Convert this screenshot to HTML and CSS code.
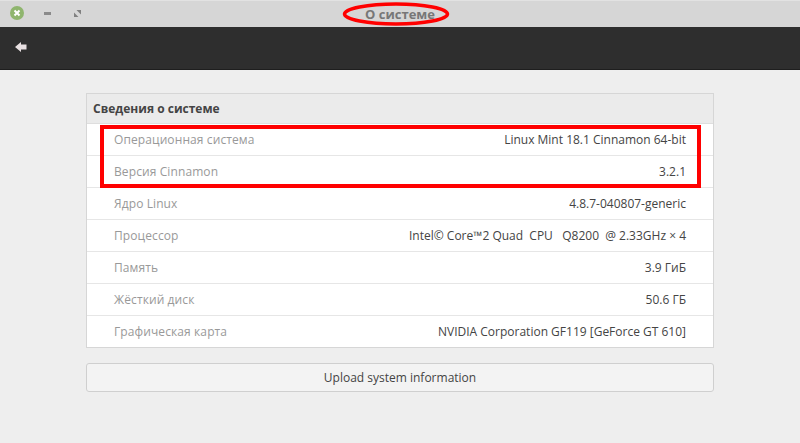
FILE: index.html
```html
<!DOCTYPE html>
<html lang="ru">
<head>
<meta charset="utf-8">
<title>О системе</title>
<link rel="stylesheet" href="styles.css">
</head>
<body>
<div class="window">
  <header class="titlebar">
    <div class="controls">
      <span class="close"><svg width="14" height="14" viewBox="0 0 14 14"><circle cx="7" cy="7" r="7" fill="#8fb56e"/><path d="M4.5 4.5l5 5M9.5 4.5l-5 5" stroke="#fff" stroke-width="2"/></svg></span>
      <span class="minimize"><svg width="7" height="3" viewBox="0 0 7 3"><rect width="7" height="3" fill="#8a8a8a"/></svg></span>
      <span class="maximize"><svg width="7" height="7" viewBox="0 0 7 7"><path d="M2.5 0H7V4.5ZM0 2.5L4.5 7H0Z" fill="#808080"/></svg></span>
    </div>
    <div class="title">О системе</div>
  </header>
  <div class="toolbar">
    <svg class="back" width="12" height="10" viewBox="0 0 12 10"><path d="M0 5L6 0V2.5H11.5V7.5H6V10Z" fill="#e8e0e2"/></svg>
  </div>
  <main class="content">
    <section class="panel">
      <div class="panel-head">Сведения о системе</div>
      <div class="row"><span class="label">Операционная система</span><span class="value">Linux Mint 18.1 Cinnamon 64-bit</span></div>
      <div class="row"><span class="label">Версия Cinnamon</span><span class="value">3.2.1</span></div>
      <div class="row"><span class="label">Ядро Linux</span><span class="value">4.8.7-040807-generic</span></div>
      <div class="row"><span class="label">Процессор</span><span class="value">Intel© Core™2 Quad&nbsp; CPU&nbsp;&nbsp; Q8200&nbsp; @ 2.33GHz × 4</span></div>
      <div class="row"><span class="label">Память</span><span class="value">3.9 ГиБ</span></div>
      <div class="row"><span class="label">Жёсткий диск</span><span class="value">50.6 ГБ</span></div>
      <div class="row"><span class="label">Графическая карта</span><span class="value">NVIDIA Corporation GF119 [GeForce GT 610]</span></div>
    </section>
    <button class="upload" type="button">Upload system information</button>
  </main>
  <svg class="mark-ellipse" width="108" height="26" viewBox="0 0 108 26"><ellipse cx="54" cy="13" ry="10" rx="51.5" fill="none" stroke="#f00" stroke-width="3.5"/></svg>
  <div class="mark-rect"></div>
</div>
</body>
</html>
```
FILE: styles.css
```css
* { box-sizing: border-box; }
html, body { margin: 0; height: 100%; }
body { font-family: "Open Sans", "Noto Sans", sans-serif; font-size: 12px; background: #eeeeee; overflow: hidden; }
.window { position: relative; width: 800px; height: 443px; display: flex; flex-direction: column; }
.titlebar { height: 27px; flex: none; background: #d6d6d6; border-top: 1px solid #e2e2e2; position: relative; display: flex; align-items: center; justify-content: center; }
.controls { position: absolute; left: 10px; top: 5px; display: flex; align-items: center; height: 14px; }
.close { display: flex; width: 14px; height: 14px; }
.minimize { display: flex; margin-left: 20px; }
.maximize { display: flex; margin-left: 23px; }
.title { font-weight: 700; font-size: 13px; color: #777777; }
.toolbar { height: 43px; flex: none; background: #2e2e2e; border-bottom: 1px solid #1e1e1e; display: flex; align-items: center; padding-left: 15px; }
.back { display: block; margin-top: -2px; }
.content { flex: 1; padding: 23px 86px 0; display: flex; flex-direction: column; }
.panel { border: 1px solid #d6d6d6; background: #fff; }
.panel-head { height: 30px; background: #ebebeb; border-bottom: 1px solid #dedede; padding-left: 6px; display: flex; align-items: center; font-weight: 700; color: #444444; }
.row { height: 32px; display: flex; align-items: center; justify-content: space-between; padding: 0 27px; border-bottom: 1px solid #e6e6e6; }
.row:last-child { border-bottom: 0; height: 31px; }
.label { color: #999999; letter-spacing: 0.1px; }
.value { color: #444444; }
.upload { margin-top: 15px; height: 29px; width: 100%; border: 1px solid #cfcfcf; border-radius: 3px; background: #f3f3f3; font: inherit; color: #444444; padding: 0; }
.mark-ellipse { position: absolute; left: 342px; top: 1px; }
.mark-rect { position: absolute; left: 100px; top: 125px; width: 601px; height: 63px; border: 4px solid #ff0000; }
```
